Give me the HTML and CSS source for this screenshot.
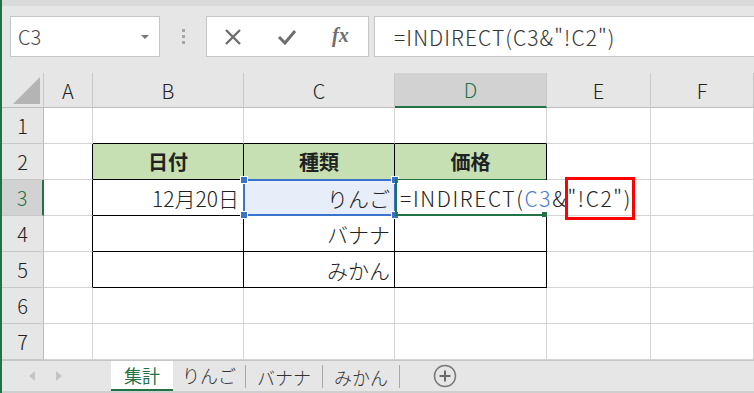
FILE: index.html
```html
<!DOCTYPE html>
<html lang="ja">
<head>
  <meta charset="UTF-8">
  <title>集計 - Excel</title>
  <link rel="stylesheet" href="styles.css">
</head>
<body>
  <div class="app">
    <div class="edge"></div>
    <div class="main">
      <div class="topline"></div>

      <!-- formula bar -->
      <div class="formula-bar">
        <div class="namebox">
          <span>C3</span>
          <span class="caret"></span>
        </div>
        <div class="grip"><i></i><i></i><i></i></div>
        <div class="fx-buttons">
          <svg width="18" height="18" viewBox="0 0 18 18"><path d="M2 2 L16 16 M16 2 L2 16" stroke="#6e6e6e" stroke-width="2.4" fill="none"/></svg>
          <svg width="20" height="18" viewBox="0 0 20 18"><path d="M2 9 L8 15 L18 3" stroke="#6e6e6e" stroke-width="3" fill="none"/></svg>
          <span class="fx">fx</span>
        </div>
        <div class="formula">=INDIRECT(C3&amp;"!C2")</div>
      </div>

      <!-- sheet grid -->
      <div class="sheet">
        <div class="h corner"><span class="tri"></span></div>
        <div class="h">A</div>
        <div class="h">B</div>
        <div class="h">C</div>
        <div class="h sel-col">D</div>
        <div class="h">E</div>
        <div class="h">F</div>

        <div class="rh">1</div>
        <div class="c"></div>
        <div class="c bb"></div>
        <div class="c bb"></div>
        <div class="c bb"></div>
        <div class="c"></div>
        <div class="c"></div>

        <div class="rh">2</div>
        <div class="c br"></div>
        <div class="c t head">日付</div>
        <div class="c t head">種類</div>
        <div class="c t head">価格</div>
        <div class="c"></div>
        <div class="c"></div>

        <div class="rh sel-row">3</div>
        <div class="c br"></div>
        <div class="c t right">12月20日</div>
        <div class="c t right ref">りんご
          <div class="ref-box"><i class="hd tl"></i><i class="hd tr"></i><i class="hd bl"></i><i class="hd br2"></i></div>
        </div>
        <div class="c t edit">
          <span class="edit-text">=INDIRECT(<span class="blue">C3</span>&amp;<span class="mark">"!C2")</span></span>
          <div class="edit-box"><i class="ghd"></i></div>
        </div>
        <div class="c"></div>
        <div class="c"></div>

        <div class="rh">4</div>
        <div class="c br"></div>
        <div class="c t"></div>
        <div class="c t right">バナナ</div>
        <div class="c t"></div>
        <div class="c"></div>
        <div class="c"></div>

        <div class="rh">5</div>
        <div class="c br"></div>
        <div class="c t"></div>
        <div class="c t right">みかん</div>
        <div class="c t"></div>
        <div class="c"></div>
        <div class="c"></div>

        <div class="rh">6</div>
        <div class="c"></div>
        <div class="c"></div>
        <div class="c"></div>
        <div class="c"></div>
        <div class="c"></div>
        <div class="c"></div>

        <div class="rh">7</div>
        <div class="c"></div>
        <div class="c"></div>
        <div class="c"></div>
        <div class="c"></div>
        <div class="c"></div>
        <div class="c"></div>
      </div>

      <!-- sheet tabs -->
      <div class="tabs">
        <div class="nav">
          <span class="arrow left"></span>
          <span class="arrow right"></span>
        </div>
        <div class="tab active">集計</div>
        <div class="tab">りんご</div>
        <div class="tab sep">バナナ</div>
        <div class="tab sep">みかん</div>
        <div class="tab-end"></div>
        <svg class="add" width="24" height="24" viewBox="0 0 24 24">
          <circle cx="12" cy="12" r="10.5" stroke="#7a7a7a" stroke-width="1.5" fill="none"/>
          <path d="M12 6.5 V17.5 M6.5 12 H17.5" stroke="#6a6a6a" stroke-width="2"/>
        </svg>
      </div>
    </div>
  </div>
</body>
</html>
```

FILE: styles.css
```css
body {
  margin: 0;
  font-family: "Noto Sans CJK JP", "Noto Sans", sans-serif;
  background: #e6e6e6;
  color: #222;
}

.app {
  display: flex;
  width: 754px;
  height: 393px;
  overflow: hidden;
}

.edge {
  width: 2px;
  background: #217346;
  flex-shrink: 0;
}

.main {
  flex: 1;
  display: flex;
  flex-direction: column;
  min-width: 0;
}

.main > * {
  flex-shrink: 0;
}

.topline {
  height: 6px;
  background: #dadada;
}

/* formula bar */
.formula-bar {
  display: flex;
  align-items: center;
  height: 41px;
  padding: 10px 0 16px 8px;
}

.namebox {
  width: 150px;
  height: 41px;
  box-sizing: border-box;
  background: #fff;
  border: 1px solid #c6c6c6;
  display: flex;
  align-items: center;
  justify-content: space-between;
  padding: 0 10px 0 7px;
  font-size: 20px;
  font-weight: 300;
  color: #444;
}

.caret {
  width: 0;
  height: 0;
  border-left: 4px solid transparent;
  border-right: 4px solid transparent;
  border-top: 4px solid #777;
}

.grip {
  width: 46px;
  display: flex;
  flex-direction: column;
  align-items: center;
  gap: 3px;
}

.grip i {
  width: 3px;
  height: 3px;
  background: #a6a6a6;
}

.fx-buttons {
  width: 163px;
  height: 41px;
  box-sizing: border-box;
  background: #fff;
  border: 1px solid #c6c6c6;
  display: flex;
  align-items: center;
  gap: 35px;
  padding-left: 17px;
}

.fx {
  font-family: "Liberation Serif", serif;
  font-style: italic;
  font-weight: bold;
  font-size: 20px;
  color: #6e6e6e;
  margin-top: -3px;
}

.formula {
  flex: 1;
  height: 41px;
  margin-left: 5px;
  box-sizing: border-box;
  background: #fff;
  border: 1px solid #c6c6c6;
  border-right: none;
  display: flex;
  align-items: center;
  padding-left: 19px;
  font-size: 21px;
  font-weight: 300;
  letter-spacing: 1.1px;
  color: #333;
  white-space: nowrap;
}

/* sheet */
.sheet {
  display: grid;
  grid-template-columns: 42px 49px 151px 151px 152px 104px 1fr;
  grid-template-rows: 35px repeat(7, 36px);
  background: #fff;
  font-size: 21px;
  font-weight: 300;
}

.h, .rh, .c {
  box-sizing: border-box;
  display: flex;
  align-items: center;
  white-space: nowrap;
}

.h {
  background: #e6e6e6;
  justify-content: center;
  border-right: 1px solid #c8c8c8;
  border-bottom: 1px solid #bcbcbc;
  color: #222;
  font-size: 20px;
}

.corner {
  position: relative;
}

.tri {
  position: absolute;
  right: 3px;
  bottom: 3px;
  width: 0;
  height: 0;
  border-left: 27px solid transparent;
  border-bottom: 27px solid #b4b4b4;
}

.sel-col {
  background: #d2d2d2;
  color: #217346;
  border-bottom: 2px solid #217346;
}

.rh {
  background: #e6e6e6;
  justify-content: center;
  border-right: 1px solid #bcbcbc;
  border-bottom: 1px solid #c8c8c8;
  font-size: 20px;
}

.sel-row {
  background: #d2d2d2;
  color: #217346;
  border-right: 2px solid #217346;
}

.c {
  border-right: 1px solid #d4d4d4;
  border-bottom: 1px solid #d4d4d4;
  padding: 0 4px;
}

.bb {
  border-bottom-color: #000;
}

.br {
  border-right-color: #000;
}

.t {
  border-right-color: #000;
  border-bottom-color: #000;
}

.head {
  background: #c6e0b4;
  justify-content: center;
  font-weight: bold;
  font-size: 20px;
}

.right {
  justify-content: flex-end;
}

/* referenced cell C3 */
.ref {
  position: relative;
  background: #e7eef9;
}

.ref-box {
  position: absolute;
  left: -1px;
  top: -1px;
  right: -2px;
  bottom: -1px;
  border: 2px solid #3b73cc;
}

.hd {
  position: absolute;
  width: 6px;
  height: 6px;
  background: #3b73cc;
  border: 1px solid #fff;
}

.tl { left: -5px; top: -5px; }
.tr { right: -5px; top: -5px; }
.bl { left: -5px; bottom: -5px; }
.br2 { right: -5px; bottom: -5px; }

/* cell being edited D3 */
.edit {
  position: relative;
  border-right-color: #fff;
  padding-left: 5px;
  overflow: visible;
  z-index: 1;
}

.edit-text {
  color: #222;
  letter-spacing: 1.65px;
}

.blue {
  color: #4a7bd0;
}

.mark {
  position: relative;
}

.mark::after {
  content: "";
  position: absolute;
  left: -2px;
  right: -3px;
  top: -6px;
  bottom: -7px;
  border: 3px solid #f00;
}

.edit-box {
  position: absolute;
  left: 0;
  top: -1px;
  right: 0;
  bottom: -1px;
  border: 2px solid #217346;
  border-right: none;
  border-top-width: 1px;
}

.ghd {
  position: absolute;
  right: -1px;
  bottom: -3px;
  width: 5px;
  height: 5px;
  background: #217346;
}

/* sheet tabs */
.tabs {
  height: 33px;
  box-sizing: border-box;
  display: flex;
  align-items: stretch;
  background: #e6e6e6;
  border-top: 1px solid #c6c6c6;
  border-bottom: 2px solid #cfcfcf;
  font-size: 18px;
  font-weight: 300;
  line-height: 20px;
  color: #333;
}

.nav {
  width: 109px;
  display: flex;
  align-items: center;
  gap: 21px;
  padding-left: 27px;
  box-sizing: border-box;
}

.arrow {
  width: 0;
  height: 0;
  border-top: 5px solid transparent;
  border-bottom: 5px solid transparent;
}

.arrow.left { border-right: 6px solid #c4c4c4; }
.arrow.right { border-left: 6px solid #c4c4c4; }

.tab {
  display: flex;
  align-items: center;
  padding: 0 9px 2px;
}

.tab.sep {
  border-left: 1px solid #a8a8a8;
  margin: 4px 0 3px;
  padding: 0 11px;
}

.tab.active {
  background: #fff;
  color: #217346;
  font-weight: 400;
  padding: 0 13px;
  border-bottom: 2px solid #217346;
}

.tab-end {
  border-left: 1px solid #a8a8a8;
  margin: 4px 0 3px;
}

.add {
  align-self: center;
  margin-left: 33px;
}
```
